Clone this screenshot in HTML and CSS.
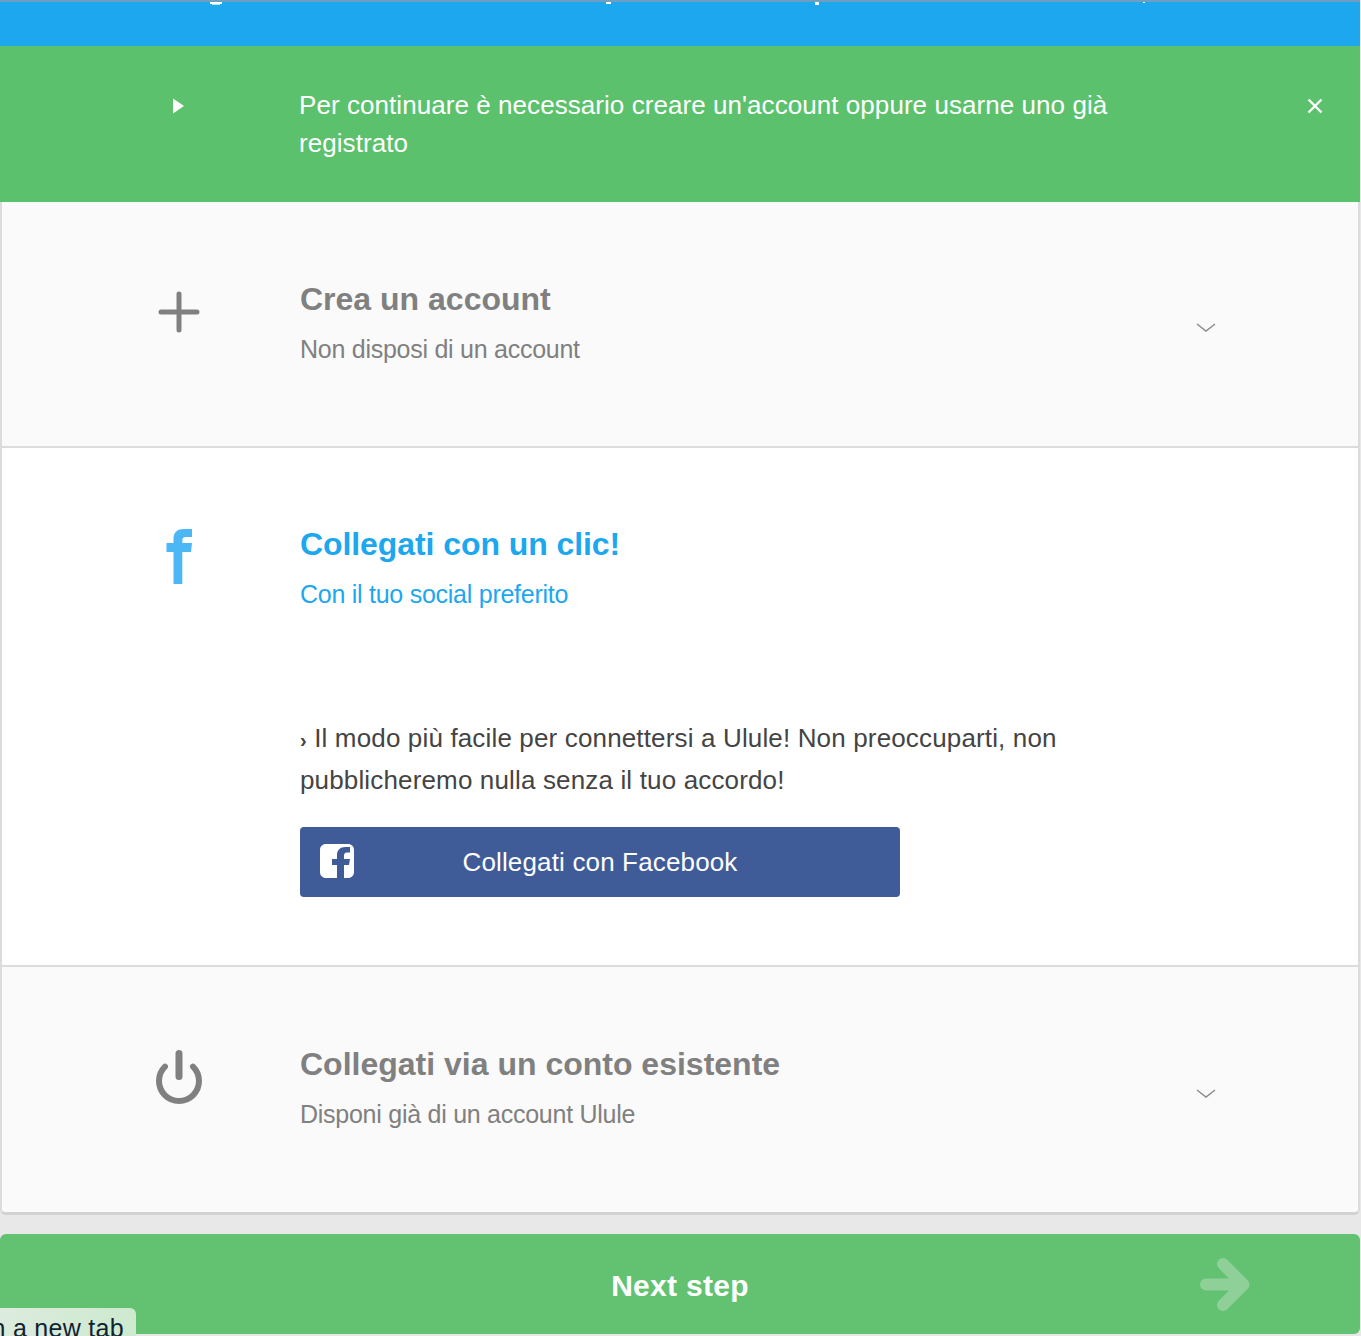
FILE: index.html
```html
<!DOCTYPE html>
<html lang="it">
<head>
<meta charset="utf-8">
<title>Ulule</title>
<link rel="stylesheet" href="styles.css">
</head>
<body>
<div class="page">
  <div class="topbar">
    <i class="mark m1"></i><i class="mark m1b"></i><i class="mark m2"></i><i class="mark m3"></i><i class="mark m4"></i>
  </div>
  <div class="notice">
    <div class="notice-icon">
      <svg width="14" height="18" viewBox="0 0 14 18"><path d="M2 1.500 L13 9 L2 16.500 Z" fill="#fff"/></svg>
    </div>
    <p class="notice-text">Per continuare è necessario creare un'account oppure usarne uno già registrato</p>
    <svg class="close" width="16" height="16" viewBox="0 0 16 16"><path d="M1.500 1.500 L14.500 14.500 M14.500 1.500 L1.500 14.500" stroke="#fff" stroke-width="2.400" fill="none"/></svg>
  </div>
  <div class="panel">
    <section class="row row-muted row-first">
      <div class="row-head">
        <div class="col-icon">
          <svg width="44" height="44" viewBox="0 0 44 44"><path d="M22 4 V40 M4 22 H40" stroke="#808080" stroke-width="5" stroke-linecap="round" fill="none"/></svg>
        </div>
        <div class="row-text">
          <h2 class="row-title">Crea un account</h2>
          <p class="row-sub">Non disposi di un account</p>
        </div>
        <svg class="chev" width="20" height="10" viewBox="0 0 20 10"><path d="M1 1 L10 8 L19 1" stroke="#8a8a8a" stroke-width="1.400" fill="none"/></svg>
      </div>
    </section>
    <section class="row row-open">
      <div class="row-head">
        <div class="col-icon">
          <svg width="30" height="58" viewBox="0 0 30 58"><path d="M9.500 56 V24 H2.500 V15 H9.500 V11 C9.500 4 13.500 1 20 1 H28 V9 H22 C19.500 9 18.300 10 18.300 12.500 V15 H28 L27 24 H18.300 V56 Z" fill="#4bb8f5"/></svg>
        </div>
        <div class="row-text">
          <h2 class="row-title blue">Collegati con un clic!</h2>
          <p class="row-sub blue">Con il tuo social preferito</p>
        </div>
      </div>
      <div class="row-body">
        <p class="lead"><span class="chevron">›</span> Il modo più facile per connettersi a Ulule! Non preoccuparti, non pubblicheremo nulla senza il tuo accordo!</p>
        <a class="fb-btn">
          <svg class="fb-icon" width="36" height="36" viewBox="0 0 36 36"><path d="M7 1 H29 C32.500 1 35 3.500 35 7 V29 C35 32.500 32.500 35 29 35 H25 V22 H30 L31 16 H25 V12.500 C25 10.500 26 9.500 28 9.500 H31 V4 H26.500 C21 4 18 7.500 18 12 V16 H13 V22 H18 V35 H7 C3.500 35 1 32.500 1 29 V7 C1 3.500 3.500 1 7 1 Z" fill="#fff"/></svg>
          <span>Collegati con Facebook</span>
        </a>
      </div>
    </section>
    <section class="row row-muted row-last">
      <div class="row-head">
        <div class="col-icon">
          <svg width="48" height="56" viewBox="0 0 48 56"><path d="M10 17.700 A20 20 0 1 0 38 17.700" stroke="#808080" stroke-width="6" stroke-linecap="round" fill="none"/><path d="M24 4.500 V27.500" stroke="#808080" stroke-width="7" stroke-linecap="round" fill="none"/></svg>
        </div>
        <div class="row-text">
          <h2 class="row-title">Collegati via un conto esistente</h2>
          <p class="row-sub">Disponi già di un account Ulule</p>
        </div>
        <svg class="chev" width="20" height="10" viewBox="0 0 20 10"><path d="M1 1 L10 8 L19 1" stroke="#8a8a8a" stroke-width="1.400" fill="none"/></svg>
      </div>
    </section>
  </div>
  <a class="next">
    <span>Next step</span>
    <svg class="arrow" width="52" height="54" viewBox="0 0 52 54"><path d="M7 26.500 H44 M24 6 L44.500 26.500 L24 47" stroke="#8ed098" stroke-width="12" stroke-linecap="round" stroke-linejoin="round" fill="none"/></svg>
  </a>
  <div class="tab-tip"><span>Open in a new tab</span></div>
</div>
</body>
</html>
```
FILE: styles.css
```css
* { box-sizing: border-box; }
html, body { margin: 0; padding: 0; }
body {
  background: #e8e8e8;
  font-family: "Liberation Sans", Arial, sans-serif;
  color: #444;
  height: 1336px;
  overflow: hidden;
}
.page { position: relative; width: 1360px; height: 1336px; overflow: hidden; }
.topbar {
  position: relative;
  height: 46px;
  background: #1ca7ef;
  border-top: 2px solid #6d9fc0;
}
.mark { position: absolute; top: 0; background: #fff; display: block; }
.m1 { left: 210px; width: 12px; height: 2px; }
.m1b { left: 212px; top: 2px; width: 8px; height: 1px; opacity: .7; }
.m2 { left: 606px; width: 5px; height: 2px; }
.m3 { left: 815px; width: 4px; height: 3px; }
.m4 { left: 1143px; width: 2px; height: 1px; }
.notice {
  height: 156px;
  background: #5cc16d;
  color: #fff;
  display: flex;
  align-items: flex-start;
  padding-top: 40px;
  position: relative;
}
.notice-icon { width: 299px; padding: 11px 0 0 56px; flex: none; display: flex; justify-content: center; }
.notice-text {
  margin: 0;
  width: 860px;
  font-size: 26px;
  line-height: 38px;
  letter-spacing: 0.06px;
}
.close { position: absolute; left: 1307px; top: 52px; }
.panel {
  background: #fff;
  border-left: 2px solid #dcdcdc;
  border-right: 2px solid #dcdcdc;
  border-bottom: 3px solid #d2d2d2;
  border-radius: 0 0 6px 6px;
}
.row { border-bottom: 2px solid #dcdcdc; }
.row-muted { background: #fafafa; height: 245px; }
.row-first { height: 246px; }
.row-open { height: 519px; background: #fff; }
.row-last { border-bottom: 0; height: 245px; border-radius: 0 0 6px 6px; }
.row-head { display: flex; align-items: flex-start; padding-top: 76px; position: relative; }
.row-open .row-head { padding-top: 75px; }
.col-icon { width: 298px; height: 68px; padding-left: 56px; flex: none; display: flex; justify-content: center; align-items: center; }
.row-text { flex: 1; }
.row-title {
  margin: 0;
  font-size: 32px;
  line-height: 42px;
  font-weight: 700;
  color: #808080;
}
.row-open .row-title { letter-spacing: -0.08px; }
.row-sub {
  margin: 12px 0 0;
  font-size: 25px;
  line-height: 34px;
  color: #808080;
  letter-spacing: -0.26px;
}
.blue { color: #1ca7ef; }
.chev { position: absolute; left: 1194px; top: 121px; }
.row-last .chev { top: 122px; }
.row-body { padding: 106px 0 0 298px; }
.lead {
  margin: 0;
  width: 790px;
  font-size: 26px;
  line-height: 42px;
  color: #444;
  letter-spacing: 0.15px;
}
.chevron { font-size: 20px; line-height: 1; font-weight: 700; }
.fb-btn {
  display: flex;
  align-items: center;
  justify-content: center;
  position: relative;
  width: 600px;
  height: 70px;
  margin-top: 26px;
  background: #3f5c98;
  border-radius: 4px;
  color: #fff;
  font-size: 26px;
  letter-spacing: 0.15px;
}
.fb-icon { position: absolute; left: 19px; top: 16px; }
.next {
  position: relative;
  display: flex;
  align-items: center;
  justify-content: center;
  width: 1360px;
  height: 100px;
  margin-top: 19px;
  padding-top: 4px;
  background: #63c272;
  border-radius: 6px;
  color: #fff;
  font-size: 30px;
  font-weight: 700;
  letter-spacing: 0.3px;
}
.arrow { position: absolute; left: 1199px; top: 24px; }
.tab-tip {
  position: absolute;
  left: 0;
  top: 1308px;
  width: 136px;
  height: 28px;
  padding: 5px 12px 0 0;
  background: linear-gradient(90deg, #dcebdd, #cdeacf);
  border-radius: 0 6px 0 0;
  color: #123;
  font-size: 25px;
  letter-spacing: 0.3px;
  line-height: 30px;
  white-space: nowrap;
  overflow: hidden;
  display: flex;
  justify-content: flex-end;
}
.tab-tip span { flex: none; }
```
